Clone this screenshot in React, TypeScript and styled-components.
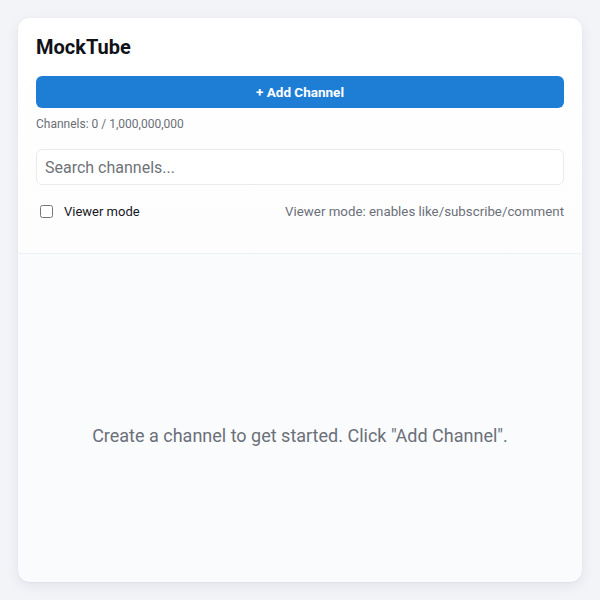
import React, { useState } from 'react';
import styled, { createGlobalStyle } from 'styled-components';

const GlobalStyle = createGlobalStyle`
  html, body {
    margin: 0;
    padding: 0;
    background: #f3f4f8;
    font-family: Roboto, "Liberation Sans", Arial, sans-serif;
  }
  * { box-sizing: border-box; }
`;

const Page = styled.div`
  padding: 18px;
  height: 600px;
  display: flex;
`;

const Card = styled.div`
  flex: 1;
  display: flex;
  flex-direction: column;
  background: #fafbfd;
  border-radius: 12px;
  box-shadow: 0 4px 14px rgba(20, 30, 60, 0.07), 0 1px 2px rgba(20, 30, 60, 0.04);
  overflow: hidden;
`;

const Header = styled.div`
  background: linear-gradient(#ffffff, #fdfdfe);
  padding: 18px 18px 32px;
  border-bottom: 1px solid #eef0f3;
  display: flex;
  flex-direction: column;
`;

const Title = styled.h1`
  margin: 0 0 18px;
  font-size: 20px;
  line-height: 22px;
  font-weight: 700;
  color: #111318;
`;

const AddButton = styled.button`
  height: 32px;
  border: none;
  border-radius: 6px;
  background: #1e7ed6;
  color: #fff;
  font-family: inherit;
  font-size: 13.5px;
  font-weight: 700;
  cursor: pointer;
`;

const Counter = styled.div`
  margin-top: 8px;
  font-size: 12px;
  line-height: 16px;
  color: #6b7078;
`;

const Search = styled.input`
  margin-top: 17px;
  height: 36px;
  border: 1px solid #e8eaee;
  border-radius: 6px;
  padding: 0 8px;
  font-family: inherit;
  font-size: 16px;
  color: #222;
  background: #fff;
  outline: none;
  &::placeholder { color: #6f7379; }
`;

const OptionsRow = styled.div`
  margin-top: 16px;
  height: 20px;
  display: flex;
  align-items: center;
  justify-content: space-between;
  font-size: 13px;
`;

const CheckLabel = styled.label`
  display: flex;
  align-items: center;
  gap: 11px;
  color: #16181c;
  padding-left: 4px;
`;

const Check = styled.input`
  margin: 0;
  width: 13px;
  height: 13px;
`;

const Hint = styled.span`
  font-size: 13.3px;
  color: #6b7078;
`;

const Body = styled.div`
  flex: 1;
  display: flex;
  align-items: center;
  justify-content: center;
  padding-top: 34px;
`;

const Empty = styled.div`
  font-size: 18px;
  color: #6b7078;
`;

export default function App() {
  const [viewer, setViewer] = useState(false);
  const [query, setQuery] = useState('');
  return (
    <>
      <GlobalStyle />
      <Page>
        <Card>
          <Header>
            <Title>MockTube</Title>
            <AddButton>+ Add Channel</AddButton>
            <Counter>Channels: 0 / 1,000,000,000</Counter>
            <Search
              placeholder="Search channels..."
              value={query}
              onChange={(e) => setQuery(e.target.value)}
            />
            <OptionsRow>
              <CheckLabel>
                <Check
                  type="checkbox"
                  checked={viewer}
                  onChange={(e) => setViewer(e.target.checked)}
                />
                Viewer mode
              </CheckLabel>
              <Hint>Viewer mode: enables like/subscribe/comment</Hint>
            </OptionsRow>
          </Header>
          <Body>
            <Empty>Create a channel to get started. Click "Add Channel".</Empty>
          </Body>
        </Card>
      </Page>
    </>
  );
}
